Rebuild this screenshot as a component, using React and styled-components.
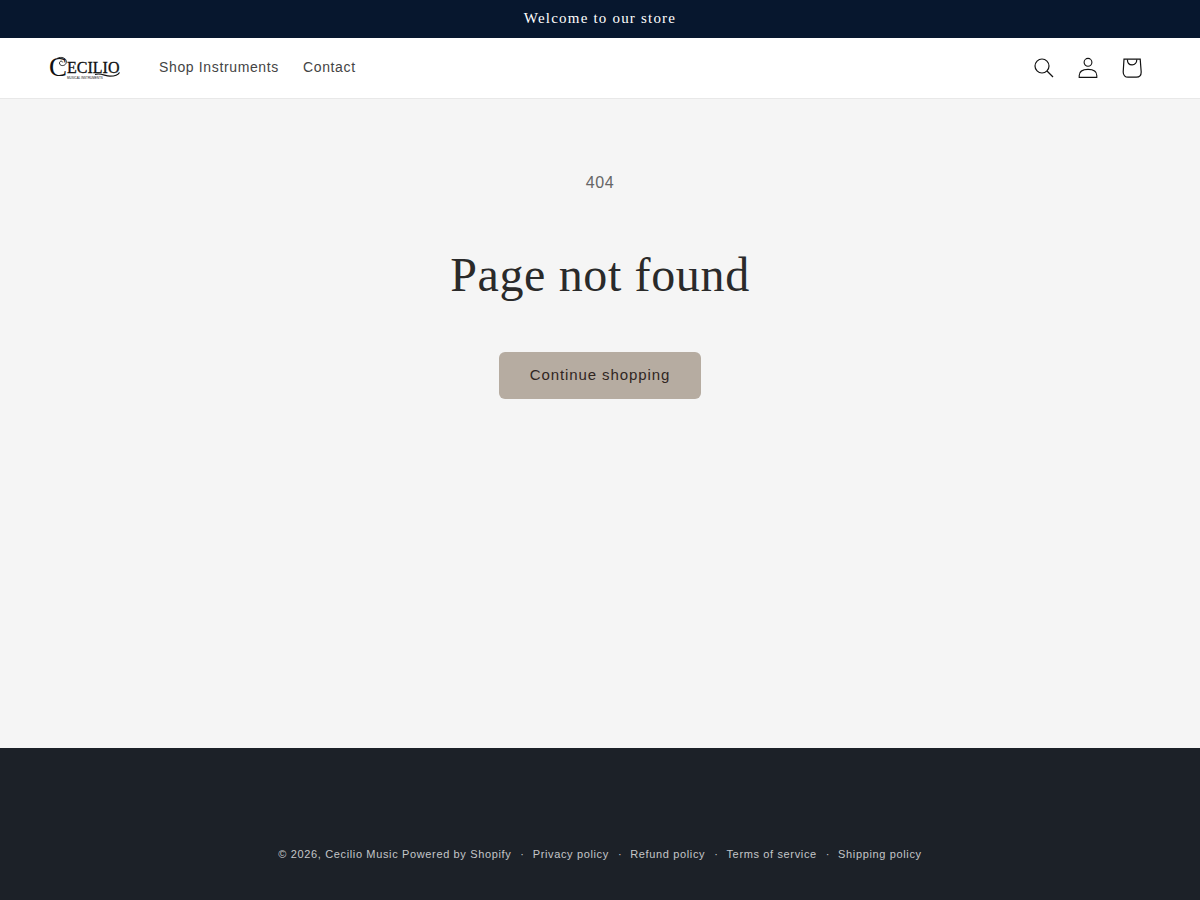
import React from 'react';
import styled, { createGlobalStyle } from 'styled-components';

const GlobalStyle = createGlobalStyle`
  * {
    box-sizing: border-box;
  }

  body {
    margin: 0;
    background: #f5f5f5;
    font-family: 'Liberation Sans', Arial, sans-serif;
    letter-spacing: 0.04em;
  }

  a {
    color: inherit;
    text-decoration: none;
  }
`;

const Page = styled.div`
  min-height: 100vh;
  display: flex;
  flex-direction: column;
`;

const AnnouncementBar = styled.div`
  padding: 7px 16px 9px;
  background: #07172e;
  color: #ffffff;
  text-align: center;
`;

const Announcement = styled.p`
  margin: 0;
  font-family: 'Liberation Serif', 'Times New Roman', serif;
  font-size: 15px;
  line-height: 22px;
  letter-spacing: 0.08em;
`;

const Header = styled.header`
  display: flex;
  align-items: center;
  justify-content: space-between;
  height: 61px;
  padding: 0 46px 0 49px;
  background: #ffffff;
  border-bottom: 1px solid #e8e8e8;
`;

const HeaderGroup = styled.div`
  display: flex;
  align-items: center;
`;

const LogoLink = styled.a`
  display: flex;
  margin-right: 26px;
`;

const Nav = styled.nav`
  display: flex;
`;

const NavLink = styled.a`
  padding: 10px 12px 12px;
  color: #444444;
  font-size: 14px;
  line-height: 20px;
`;

const IconButton = styled.button`
  display: flex;
  align-items: center;
  justify-content: center;
  width: 44px;
  height: 44px;
  padding: 0;
  border: 0;
  background: none;
  color: #121212;
  cursor: pointer;
`;

const Main = styled.main`
  flex: 1;
  display: flex;
  flex-direction: column;
  align-items: center;
  padding: 70px 16px;
  text-align: center;
`;

const ErrorCode = styled.p`
  margin: 0 0 48px;
  color: #666666;
  font-size: 16px;
  line-height: 28px;
`;

const Title = styled.h1`
  margin: 0;
  color: #2a2a2a;
  font-family: 'Liberation Serif', 'Times New Roman', serif;
  font-size: 48px;
  font-weight: 400;
  line-height: 60px;
`;

const ButtonLink = styled.a`
  margin-top: 47px;
  padding: 11px 31px 13px;
  border-radius: 6px;
  background: #b6aca1;
  color: #30261f;
  font-size: 15px;
  line-height: 23px;
  letter-spacing: 0.06em;
`;

const Footer = styled.footer`
  display: flex;
  flex-wrap: wrap;
  justify-content: center;
  padding: 96px 16px 36px;
  background: #1c2128;
  color: #c4c6c9;
  font-size: 11px;
  line-height: 20px;
`;

const PolicyList = styled.ul`
  display: flex;
  flex-wrap: wrap;
  margin: 0;
  padding: 0;
  list-style: none;
`;

const PolicyItem = styled.li`
  &::before {
    content: '·';
    padding: 0 8px 0 9px;
  }
`;

const Logo = () => (
  <svg width="72" height="30" viewBox="0 0 72 30" fill="none" role="img" aria-label="Cecilio">
    <g fill="#111111" fontFamily="'Liberation Serif', serif" letterSpacing="0">
      <text x="0" y="23" fontSize="27">C</text>
      <text x="18" y="20" fontSize="16" stroke="#111111" strokeWidth="0.3">ECILIO</text>
      <text x="18" y="26" fontFamily="'Liberation Sans', sans-serif" fontSize="3">MUSICAL INSTRUMENTS</text>
    </g>
    <path d="M8 5.5C12 3 18 5 17.3 9.5C16.5 13.5 10.5 13.5 10.5 10C10.500 8 13 7.5 13.7 9.3" stroke="#111111" strokeWidth="0.9" />
    <path d="M46 21.5C52 19.5 56 23.2 61 23.2C66 23.2 69 22.2 70.5 19.5" stroke="#111111" strokeWidth="1.2" />
  </svg>
);

const SearchIcon = () => (
  <svg width="20" height="20" viewBox="0 0 20 20" fill="none" stroke="currentColor" strokeWidth="1.2" aria-hidden="true">
    <circle cx="8" cy="8" r="7" />
    <path d="M13 13L19 19" />
  </svg>
);

const AccountIcon = () => (
  <svg width="20" height="22" viewBox="0 0 20 22" fill="none" stroke="currentColor" strokeWidth="1.1" aria-hidden="true">
    <circle cx="10" cy="5.3" r="3.9" />
    <path d="M1.2 20.4V18.5C1.2 14.5 4.8 12.4 10 12.4S18.8 14.5 18.8 18.5V20.4Z" />
  </svg>
);

const CartIcon = () => (
  <svg width="20" height="20" viewBox="0 0 20 20" fill="none" stroke="currentColor" strokeWidth="1.2" aria-hidden="true">
    <path d="M2 1.2H18.2L19.2 14C19.2 17.3 17.3 19.2 14.4 19.2H6C3.2 19.2 1.2 17.3 1.2 14Z" />
    <path d="M5.4 1.4C5.4 4.8 7.3 6.8 10.1 6.8S14.8 4.8 14.8 1.4" />
  </svg>
);

const navLinks = ['Shop Instruments', 'Contact'];

const policies = ['Privacy policy', 'Refund policy', 'Terms of service', 'Shipping policy'];

const App = () => {
  return (
    <Page>
      <GlobalStyle />
      <AnnouncementBar>
        <Announcement>Welcome to our store</Announcement>
      </AnnouncementBar>

      <Header>
        <HeaderGroup>
          <LogoLink href="#">
            <Logo />
          </LogoLink>
          <Nav>
            {navLinks.map((text) => (
              <NavLink key={text} href="#">
                {text}
              </NavLink>
            ))}
          </Nav>
        </HeaderGroup>
        <HeaderGroup>
          <IconButton type="button" aria-label="Search">
            <SearchIcon />
          </IconButton>
          <IconButton type="button" aria-label="Log in">
            <AccountIcon />
          </IconButton>
          <IconButton type="button" aria-label="Cart">
            <CartIcon />
          </IconButton>
        </HeaderGroup>
      </Header>

      <Main>
        <ErrorCode>404</ErrorCode>
        <Title>Page not found</Title>
        <ButtonLink href="#">Continue shopping</ButtonLink>
      </Main>

      <Footer>
        <span>
          © 2026, <a href="#">Cecilio Music</a> <a href="#">Powered by Shopify</a>
        </span>
        <PolicyList>
          {policies.map((text) => (
            <PolicyItem key={text}>
              <a href="#">{text}</a>
            </PolicyItem>
          ))}
        </PolicyList>
      </Footer>
    </Page>
  );
};

export default App;
